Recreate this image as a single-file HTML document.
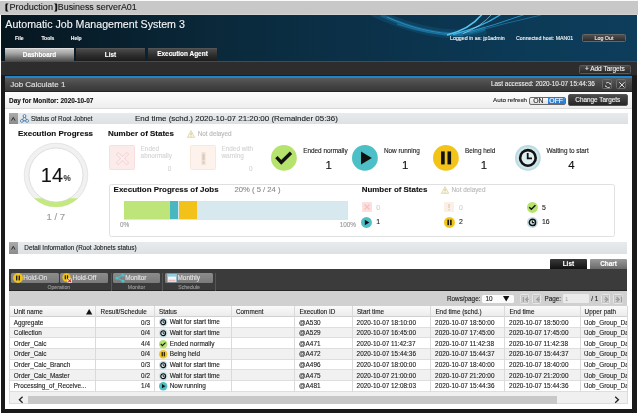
<!DOCTYPE html>
<html><head><meta charset="utf-8">
<style>
*{margin:0;padding:0;box-sizing:border-box}
html,body{width:638px;height:414px;overflow:hidden;background:#fff;font-family:"Liberation Sans",sans-serif;position:relative}
.a{position:absolute;white-space:nowrap;-webkit-text-stroke:0.12px currentColor}
svg{position:absolute;overflow:visible}
</style></head><body><div id="root" style="position:absolute;left:0;top:0;width:638px;height:414px;will-change:transform">

<div class="a" style="left:0px;top:0px;width:638.00px;height:15.00px;background:#c8c8c8;border-top:1px solid #fafafa;border-bottom:1px solid #d2d2d2"></div>
<svg width="60" height="14" style="left:0;top:0"><path d="M8.6 3.4 L6.4 3.4 Q5.4 3.4 5.4 4.6 L5.4 10.2 Q5.4 11.4 6.4 11.4 L8.6 11.4 Q7.2 10.6 7.2 9.2 L7.2 5.6 Q7.2 4.2 8.6 3.4Z" fill="#111"/><path d="M54 3.4 L56.2 3.4 Q57.2 3.4 57.2 4.6 L57.2 10.2 Q57.2 11.4 56.2 11.4 L54 11.4 Q55.4 10.6 55.4 9.2 L55.4 5.6 Q55.4 4.2 54 3.4Z" fill="#111"/></svg>
<div class="a" style="left:9.50px;top:2.16px;font-size:9.1px;line-height:11.375px;color:#1a1a1a">Production</div>
<div class="a" style="left:57.80px;top:2.35px;font-size:8.9px;line-height:11.125px;color:#1a1a1a">Business serverA01</div>
<div class="a" style="left:1px;top:15px;width:636.00px;height:397.50px;background:#1a1a1a"></div>
<div class="a" style="left:1px;top:15px;width:636.00px;height:46.00px;background:linear-gradient(90deg,#06161f 0%,#08202e 18%,#0a293b 35%,#0b2f45 50%,#0b3550 70%,#0c3b58 85%,#0c3d5b 100%);overflow:hidden"><svg width="636" height="46" style="left:0;top:0">
<path d="M372 -3 C400 10 428 18 452 19 C465 19.5 475 18 485 15" stroke="#12506f" stroke-width="9" fill="none" opacity="0.55"/>
<path d="M380 0 C406 12 432 19 456 19 C468 19 476 17 484 14" stroke="#176892" stroke-width="3.5" fill="none" opacity="0.7"/>
<path d="M386 2 C412 14 436 19 460 19" stroke="#2a8cc0" stroke-width="1.2" fill="none" opacity="0.85"/>
<path d="M396 9 C420 17 440 21 462 20.5" stroke="#1b77a8" stroke-width="1.4" fill="none" opacity="0.7"/>
<path d="M446 20 Q470 14 482 -2" stroke="#55c4ee" stroke-width="1.6" fill="none"/>
<path d="M452 19.5 Q482 12 502 -2" stroke="#3cb2e4" stroke-width="1.3" fill="none"/>
<path d="M460 19 Q495 10 525 -1" stroke="#2a98cc" stroke-width="1" fill="none" opacity="0.9"/>
<path d="M468 18 Q505 8 540 0" stroke="#2288bb" stroke-width="0.8" fill="none" opacity="0.8"/>
<path d="M462 18.5 Q480 12 492 -2" stroke="#a8e4fa" stroke-width="0.7" fill="none" opacity="0.9"/>
<path d="M420 -0.5 L545 -0.5" stroke="#2a88b8" stroke-width="1" opacity="0.5"/>
</svg></div>
<div class="a" style="left:5.30px;top:17.86px;font-size:10.64px;line-height:13.3px;color:#f4f4f4">Automatic Job Management System 3</div>
<div class="a" style="left:15.00px;top:35.44px;font-size:5.0px;line-height:6.25px;color:#f0f0f0;font-weight:bold">File</div>
<div class="a" style="left:41.40px;top:35.44px;font-size:5.0px;line-height:6.25px;color:#f0f0f0;font-weight:bold">Tools</div>
<div class="a" style="left:70.80px;top:35.44px;font-size:5.0px;line-height:6.25px;color:#f0f0f0;font-weight:bold">Help</div>
<div class="a" style="left:450.00px;top:35.15px;font-size:5.3px;line-height:6.625px;color:#f4f4f4">Logged in as: jp1admin</div>
<div class="a" style="left:516.00px;top:35.20px;font-size:5.25px;line-height:6.562px;color:#f4f4f4">Connected host: MAN01</div>
<div class="a" style="left:582px;top:34.4px;width:44.00px;height:7.80px;background:linear-gradient(#505050,#2c2c2c);border:0.6px solid #666;border-radius:1.5px"></div>
<div class="a" style="left:554.00px;width:100px;text-align:center;top:35.15px;font-size:5.3px;line-height:6.625px;color:#f0f0f0">Log Out</div>
<div class="a" style="left:5px;top:48px;width:69.00px;height:13.00px;background:linear-gradient(#c6c6c6,#a6a6a6 35%,#6e6e6e 75%,#505050);border-top:1px solid #e0e0e0"></div>
<div class="a" style="left:76px;top:48px;width:69.00px;height:13.00px;background:linear-gradient(#4a4a4a,#2c2c2c 55%,#1c1c1c);border-top:1px solid #555"></div>
<div class="a" style="left:148px;top:48px;width:69.00px;height:13.00px;background:linear-gradient(#4a4a4a,#2c2c2c 55%,#1c1c1c);border-top:1px solid #555"></div>
<div class="a" style="left:-10.50px;width:100px;text-align:center;top:50.50px;font-size:6.38px;line-height:7.975px;color:#fff;font-weight:bold">Dashboard</div>
<div class="a" style="left:60.50px;width:100px;text-align:center;top:50.50px;font-size:6.38px;line-height:7.975px;color:#fff;font-weight:bold">List</div>
<div class="a" style="left:132.50px;width:100px;text-align:center;top:50.43px;font-size:6.45px;line-height:8.062px;color:#fff;font-weight:bold">Execution Agent</div>
<div class="a" style="left:1px;top:61px;width:636.00px;height:15.00px;background:#2d2d2d;border-top:1px solid #4a4a4a;border-bottom:1px solid #1c1c1c"></div>
<div class="a" style="left:578.8px;top:65px;width:52.00px;height:8.90px;background:linear-gradient(#4a4a4a,#2a2a2a);border:0.6px solid #5a5a5a;border-radius:1.5px"></div>
<div class="a" style="left:554.80px;width:100px;text-align:center;top:65.49px;font-size:6.5px;line-height:8.125px;color:#f0f0f0">+ Add Targets</div>
<div class="a" style="left:5px;top:76px;width:627.00px;height:332.50px;background:#fff"></div>
<div class="a" style="left:5px;top:76px;width:627.00px;height:1.60px;background:#1f86cc"></div>
<div class="a" style="left:5px;top:77.6px;width:627.00px;height:14.70px;background:linear-gradient(#5a5a5a,#464646 50%,#383838);border-bottom:1px solid #252525"></div>
<div class="a" style="left:10.20px;top:79.73px;font-size:8.0px;line-height:10.0px;color:#e2e2e2">Job Calculate 1</div>
<div class="a" style="left:491.00px;top:79.98px;font-size:6.4px;line-height:8.0px;color:#ececec">Last accessed: 2020-10-07 15:44:36</div>
<div class="a" style="left:601.8px;top:79.4px;width:10.60px;height:10.00px;background:linear-gradient(#555,#333);border:0.6px solid #6a6a6a;border-radius:1.5px"><svg width="10" height="10" style="left:0;top:0"><path d="M3 3.2 A2.6 2.6 0 0 1 7.3 4.3 M7.2 6.8 A2.6 2.6 0 0 1 2.8 5.8" stroke="#ddd" stroke-width="0.9" fill="none"/><path d="M6.2 3.9 L7.8 4.8 L7.9 2.9Z M3.9 6.2 L2.3 5.3 L2.2 7.1Z" fill="#ddd"/></svg></div>
<div class="a" style="left:615.6px;top:79.4px;width:10.40px;height:10.00px;background:linear-gradient(#555,#333);border:0.6px solid #6a6a6a;border-radius:1.5px"><svg width="10" height="10" style="left:0;top:0"><path d="M2.3 2.3 L7.5 7.5 M7.5 2.3 L2.3 7.5" stroke="#e8e8e8" stroke-width="1"/></svg></div>
<div class="a" style="left:5px;top:92.3px;width:627.00px;height:16.70px;background:linear-gradient(#fdfdfd,#eeeeee);border-bottom:0.8px solid #d8d8d8"></div>
<div class="a" style="left:9.00px;top:97.13px;font-size:6.45px;line-height:8.062px;color:#111;font-weight:bold">Day for Monitor: 2020-10-07</div>
<div class="a" style="left:493.00px;top:95.92px;font-size:6.26px;line-height:7.825px;color:#222">Auto refresh</div>
<div class="a" style="left:529.3px;top:96.9px;width:36.70px;height:8.60px;background:linear-gradient(#fafafa,#dedede);border:0.7px solid #6a6a6a;border-radius:2px;overflow:hidden"><div class="a" style="left:17.3px;top:0;width:20px;height:10px;background:linear-gradient(#3a8ee0,#1a6cc8)"></div></div>
<div class="a" style="left:488.40px;width:100px;text-align:center;top:96.80px;font-size:6.9px;line-height:8.625px;color:#222">ON</div>
<div class="a" style="left:506.20px;width:100px;text-align:center;top:96.80px;font-size:6.9px;line-height:8.625px;color:#fff">OFF</div>
<div class="a" style="left:567.9px;top:94.3px;width:59.90px;height:11.60px;background:linear-gradient(#4a4a4a,#262626);border:0.7px solid #555;border-radius:2px"></div>
<div class="a" style="left:547.80px;width:100px;text-align:center;top:96.08px;font-size:6.4px;line-height:8.0px;color:#f2f2f2">Change Targets</div>
<div class="a" style="left:9px;top:112.8px;width:619.00px;height:11.70px;background:linear-gradient(#e8ebed,#dde1e4)"></div>
<div class="a" style="left:9px;top:112.8px;width:8.60px;height:11.70px;background:linear-gradient(#aaa,#8c8c8c)"></div>
<svg width="8" height="11" style="left:9px;top:113px"><path d="M2.6 7.6 L4.3 4.4 L6 7.6" stroke="#222" stroke-width="0.9" fill="none"/></svg>
<svg width="9" height="9" style="left:20.3px;top:114.3px" viewBox="0 0 9 9"><path d="M4.5 2 L2 6.8 L7 6.8 Z" stroke="#3a72a4" stroke-width="0.9" fill="none"/><circle cx="4.5" cy="2" r="1.4" fill="#fff" stroke="#3a72a4" stroke-width="0.85"/><circle cx="1.9" cy="6.9" r="1.4" fill="#fff" stroke="#3a72a4" stroke-width="0.85"/><circle cx="7.1" cy="6.9" r="1.4" fill="#fff" stroke="#3a72a4" stroke-width="0.85"/></svg>
<div class="a" style="left:31.00px;top:114.87px;font-size:6.41px;line-height:8.012px;color:#222">Status of Root Jobnet</div>
<div class="a" style="left:135.00px;top:113.56px;font-size:7.97px;line-height:9.963px;color:#222">End time (schd.) 2020-10-07 21:20:00 (Remainder 05:36)</div>
<div class="a" style="left:5.50px;width:100px;text-align:center;top:128.83px;font-size:8.0px;line-height:10.0px;color:#111;font-weight:bold">Execution Progress</div>
<svg width="70" height="70" style="left:20.8px;top:140.3px">
<defs><clipPath id="lv"><rect x="0" y="58.2" width="70" height="20"/></clipPath></defs>
<circle cx="35" cy="35" r="29.5" fill="none" stroke="#f1f1f1" stroke-width="5"/>
<circle cx="35" cy="35" r="31.8" fill="none" stroke="#dcdcdc" stroke-width="0.6"/>
<circle cx="35" cy="35" r="29.5" fill="none" stroke="#c3e97f" stroke-width="5" clip-path="url(#lv)"/>
<circle cx="35" cy="35" r="27" fill="none" stroke="#d2d2d2" stroke-width="0.7"/>
</svg>
<div class="a" style="left:40.80px;top:163.17px;font-size:20px;line-height:25.0px;color:#111;-webkit-text-stroke:0.1px #111">14</div>
<div class="a" style="left:63.60px;top:173.83px;font-size:8.2px;line-height:10.25px;color:#444;font-weight:bold">%</div>
<div class="a" style="left:5.80px;width:100px;text-align:center;top:211.27px;font-size:9.5px;line-height:11.875px;color:#9a9a9a">1 / 7</div>
<div class="a" style="left:108.00px;top:128.66px;font-size:7.97px;line-height:9.963px;color:#111;font-weight:bold">Number of States</div>
<svg width="8" height="8" style="left:187px;top:129.5px" viewBox="0 0 10 10"><path d="M5 0.8 L9.6 9.2 L0.4 9.2Z" fill="#faf6e2" stroke="#d2c890" stroke-width="0.8" stroke-linejoin="round"/><path d="M5 3.6 L5 6.6" stroke="#b8ac70" stroke-width="0.9"/><circle cx="5" cy="7.8" r="0.5" fill="#b8ac70"/></svg>
<div class="a" style="left:197.70px;top:129.91px;font-size:6.37px;line-height:7.963px;color:#b8b8b8">Not delayed</div>
<div class="a" style="left:109.3px;top:144.5px;width:25.30px;height:25.10px;background:#fcebeb;border:0.7px solid #f8dede;border-radius:1.5px"><svg width="25" height="25" style="left:0;top:0"><path d="M7 7 L18 18 M18 7 L7 18" stroke="#f5d6d6" stroke-width="3.8"/><path d="M7.6 7.6 L17.4 17.4 M17.4 7.6 L7.6 17.4" stroke="#fcf0f0" stroke-width="1.6"/></svg></div>
<div class="a" style="left:140.60px;top:144.78px;font-size:6.4px;line-height:8.0px;color:#d4d4d4">Ended</div>
<div class="a" style="left:140.60px;top:151.78px;font-size:6.4px;line-height:8.0px;color:#d4d4d4">abnormally</div>
<div class="a" style="left:167.70px;top:164.88px;font-size:6.4px;line-height:8.0px;color:#d4d4d4">0</div>
<div class="a" style="left:190.2px;top:144.5px;width:25.60px;height:25.10px;background:#fdf3ec;border:0.7px solid #f8e8dc;border-radius:1.5px"><svg width="25" height="25" style="left:0;top:0"><rect x="10.5" y="6" width="4" height="13" fill="#efe0d6"/><rect x="11.5" y="8" width="2" height="6" fill="#d8c8bd"/><rect x="11.5" y="15.5" width="2" height="2" fill="#d8c8bd"/></svg></div>
<div class="a" style="left:221.50px;top:144.78px;font-size:6.4px;line-height:8.0px;color:#d4d4d4">Ended with</div>
<div class="a" style="left:221.50px;top:151.78px;font-size:6.4px;line-height:8.0px;color:#d4d4d4">warning</div>
<div class="a" style="left:249.00px;top:164.88px;font-size:6.4px;line-height:8.0px;color:#d4d4d4">0</div>
<svg width="25.8" height="25.8" style="left:271.30px;top:144.70px" viewBox="0 0 25.8 25.8"><circle cx="12.9" cy="12.9" r="12.9" fill="#b6e26e"/><path d="M5.4 12.2 L10.3 17.3 L20 7.8" stroke="#111" stroke-width="3.3" fill="none" stroke-linecap="butt" stroke-linejoin="miter"/></svg>
<svg width="25.8" height="25.8" style="left:352.30px;top:144.70px" viewBox="0 0 25.8 25.8"><circle cx="12.9" cy="12.9" r="12.9" fill="#4dbfc6"/><path d="M9 6.4 L19.8 13 L9 19.6Z" fill="#111"/></svg>
<svg width="25.8" height="25.8" style="left:433.20px;top:144.70px" viewBox="0 0 25.8 25.8"><circle cx="12.9" cy="12.9" r="12.9" fill="#f2c419"/><rect x="8.1" y="6.4" width="3.6" height="13" fill="#111"/><rect x="14.5" y="6.4" width="3.6" height="13" fill="#111"/></svg>
<svg width="25.8" height="25.8" style="left:514.80px;top:144.70px" viewBox="0 0 25.8 25.8"><circle cx="12.9" cy="12.9" r="12.9" fill="#bcdbe3"/><circle cx="12.9" cy="12.9" r="11" fill="#cfe6ec"/><circle cx="12.9" cy="12.9" r="7.8" fill="#ddeef2" stroke="#111" stroke-width="2.6"/><path d="M12.7 8 L12.7 13.4 L17 13.4" stroke="#111" stroke-width="1.8" fill="none"/></svg>
<div class="a" style="left:303.20px;top:146.78px;font-size:6.4px;line-height:8.0px;color:#222">Ended normally</div>
<div class="a" style="left:278.60px;width:100px;text-align:center;top:158.22px;font-size:11.4px;line-height:14.25px;color:#111">1</div>
<div class="a" style="left:383.90px;top:146.78px;font-size:6.4px;line-height:8.0px;color:#222">Now running</div>
<div class="a" style="left:355.20px;width:100px;text-align:center;top:158.22px;font-size:11.4px;line-height:14.25px;color:#111">1</div>
<div class="a" style="left:465.10px;top:146.78px;font-size:6.4px;line-height:8.0px;color:#222">Being held</div>
<div class="a" style="left:434.00px;width:100px;text-align:center;top:158.22px;font-size:11.4px;line-height:14.25px;color:#111">1</div>
<div class="a" style="left:546.40px;top:146.78px;font-size:6.4px;line-height:8.0px;color:#222">Waiting to start</div>
<div class="a" style="left:521.40px;width:100px;text-align:center;top:158.22px;font-size:11.4px;line-height:14.25px;color:#111">4</div>
<div class="a" style="left:108.9px;top:183.5px;width:505.70px;height:53.00px;border:0.8px solid #e0e0e0;border-radius:2.5px"></div>
<div class="a" style="left:113.60px;top:184.99px;font-size:7.94px;line-height:9.925px;color:#111;font-weight:bold">Execution Progress of Jobs</div>
<div class="a" style="left:234.50px;top:184.96px;font-size:7.66px;line-height:9.575px;color:#8a8a8a">20% ( 5 / 24 )</div>
<div class="a" style="left:123.5px;top:200.7px;width:224.00px;height:18.90px;background:#d7e9ef;border:0.7px solid #e3e3e3"></div>
<div class="a" style="left:124px;top:201.2px;width:45.60px;height:17.90px;background:#bde57a"></div>
<div class="a" style="left:169.6px;top:201.2px;width:8.60px;height:17.90px;background:#4ab7c0"></div>
<div class="a" style="left:179px;top:201.2px;width:17.70px;height:17.90px;background:#f2c21a"></div>
<div class="a" style="left:119.90px;top:220.88px;font-size:6.4px;line-height:8.0px;color:#999">0%</div>
<div class="a" style="right:282.00px;top:220.58px;font-size:6.4px;line-height:8.0px;color:#999">100%</div>
<div class="a" style="left:361.70px;top:184.79px;font-size:7.94px;line-height:9.925px;color:#111;font-weight:bold">Number of States</div>
<svg width="8" height="8" style="left:441.2px;top:186px" viewBox="0 0 10 10"><path d="M5 0.8 L9.6 9.2 L0.4 9.2Z" fill="#faf6e2" stroke="#d2c890" stroke-width="0.8" stroke-linejoin="round"/><path d="M5 3.6 L5 6.6" stroke="#b8ac70" stroke-width="0.9"/><circle cx="5" cy="7.8" r="0.5" fill="#b8ac70"/></svg>
<div class="a" style="left:451.50px;top:185.61px;font-size:6.37px;line-height:7.963px;color:#b8b8b8">Not delayed</div>
<div class="a" style="left:361.8px;top:202.2px;width:10px;height:10px;background:#fbe0e0;border-radius:1px"><svg width="10" height="10" style="left:0;top:0"><path d="M2.5 2.5 L7.5 7.5 M7.5 2.5 L2.5 7.5" stroke="#f3c0c0" stroke-width="1.3"/></svg></div>
<div class="a" style="left:376.30px;top:203.70px;font-size:6.9px;line-height:8.625px;color:#d0d0d0">0</div>
<div class="a" style="left:444.2px;top:202.2px;width:10px;height:10px;background:#fcefe6;border-radius:1px"><svg width="10" height="10" style="left:0;top:0"><rect x="4.3" y="2" width="1.4" height="4" fill="#e2cdbd"/><rect x="4.3" y="7" width="1.4" height="1.4" fill="#e2cdbd"/></svg></div>
<div class="a" style="left:459.00px;top:203.70px;font-size:6.9px;line-height:8.625px;color:#d0d0d0">0</div>
<svg width="10.9" height="10.9" style="left:527.25px;top:201.75px" viewBox="0 0 25.8 25.8"><circle cx="12.9" cy="12.9" r="12.9" fill="#b6e26e"/><path d="M5.4 12.2 L10.3 17.3 L20 7.8" stroke="#111" stroke-width="3.3" fill="none" stroke-linecap="butt" stroke-linejoin="miter"/></svg>
<div class="a" style="left:541.90px;top:203.70px;font-size:6.9px;line-height:8.625px;color:#222">5</div>
<svg width="10.9" height="10.9" style="left:361.45px;top:216.65px" viewBox="0 0 25.8 25.8"><circle cx="12.9" cy="12.9" r="12.9" fill="#4dbfc6"/><path d="M9 6.4 L19.8 13 L9 19.6Z" fill="#111"/></svg>
<div class="a" style="left:376.30px;top:218.30px;font-size:6.9px;line-height:8.625px;color:#222">1</div>
<svg width="10.9" height="10.9" style="left:443.75px;top:216.65px" viewBox="0 0 25.8 25.8"><circle cx="12.9" cy="12.9" r="12.9" fill="#f2c419"/><rect x="8.1" y="6.4" width="3.6" height="13" fill="#111"/><rect x="14.5" y="6.4" width="3.6" height="13" fill="#111"/></svg>
<div class="a" style="left:459.00px;top:218.30px;font-size:6.9px;line-height:8.625px;color:#222">2</div>
<svg width="10.9" height="10.9" style="left:527.25px;top:216.55px" viewBox="0 0 25.8 25.8"><circle cx="12.9" cy="12.9" r="12.9" fill="#bcdbe3"/><circle cx="12.9" cy="12.9" r="11" fill="#cfe6ec"/><circle cx="12.9" cy="12.9" r="7.4" fill="#ddeef2" stroke="#111" stroke-width="3.6"/><path d="M12.7 8 L12.7 13.4 L17 13.4" stroke="#111" stroke-width="2.6" fill="none"/></svg>
<div class="a" style="left:541.90px;top:218.30px;font-size:6.9px;line-height:8.625px;color:#222">16</div>
<div class="a" style="left:9.4px;top:242.3px;width:618.10px;height:11.30px;background:linear-gradient(#e8ebed,#dde1e4)"></div>
<div class="a" style="left:9.4px;top:242.3px;width:8.20px;height:11.30px;background:linear-gradient(#aaa,#8c8c8c)"></div>
<svg width="8" height="11" style="left:9.4px;top:242.3px"><path d="M2.6 7.6 L4.3 4.4 L6 7.6" stroke="#222" stroke-width="0.9" fill="none"/></svg>
<div class="a" style="left:24.30px;top:244.10px;font-size:6.38px;line-height:7.975px;color:#222">Detail Information (Root Jobnets status)</div>
<div class="a" style="left:550px;top:258.5px;width:36.80px;height:10.70px;background:linear-gradient(#3a3a3a,#111);border-radius:1px 1px 0 0"></div>
<div class="a" style="left:518.40px;width:100px;text-align:center;top:260.08px;font-size:6.4px;line-height:8.0px;color:#fff;font-weight:bold">List</div>
<div class="a" style="left:589.7px;top:258.5px;width:37.80px;height:10.70px;background:linear-gradient(#9a9a9a,#6a6a6a);border-radius:1px 1px 0 0"></div>
<div class="a" style="left:558.60px;width:100px;text-align:center;top:260.08px;font-size:6.4px;line-height:8.0px;color:#fff;font-weight:bold">Chart</div>
<div class="a" style="left:9.4px;top:269.1px;width:618.10px;height:21.70px;background:#3b3b3b;border-bottom:1px solid #262626"></div>
<div class="a" style="left:11px;top:272.5px;width:47.80px;height:10.10px;background:linear-gradient(#8c8c8c,#7a7a7a);border-radius:1.5px"></div>
<svg width="10" height="10" style="left:13px;top:272.6px" viewBox="0 0 10 10"><circle cx="5" cy="5" r="4.9" fill="#f2c419"/><rect x="3" y="2.6" width="1.4" height="4.8" fill="#222"/><rect x="5.6" y="2.6" width="1.4" height="4.8" fill="#222"/></svg>
<div class="a" style="left:23.30px;top:273.98px;font-size:6.4px;line-height:8.0px;color:#e4e4e4">Hold-On</div>
<div class="a" style="left:60.3px;top:272.5px;width:47.50px;height:10.10px;background:linear-gradient(#8c8c8c,#7a7a7a);border-radius:1.5px"></div>
<svg width="10" height="10" style="left:62px;top:272.6px" viewBox="0 0 10 10"><circle cx="4.5" cy="4.5" r="4.2" fill="#f2c419"/><rect x="2.7" y="2.3" width="1.2" height="4" fill="#222"/><rect x="4.9" y="2.3" width="1.2" height="4" fill="#222"/><rect x="5.6" y="5.6" width="4.2" height="4.2" fill="#fff"/><path d="M6.3 6.3 L9.1 9.1 M9.1 6.3 L6.3 9.1" stroke="#e02020" stroke-width="1.1"/></svg>
<div class="a" style="left:72.60px;top:273.98px;font-size:6.4px;line-height:8.0px;color:#e4e4e4">Hold-Off</div>
<div class="a" style="left:112.9px;top:272.5px;width:47.10px;height:10.10px;background:linear-gradient(#8c8c8c,#7a7a7a);border-radius:1.5px"></div>
<svg width="10" height="10" style="left:114.5px;top:272.8px" viewBox="0 0 10 10"><path d="M2 5 L8 2 M2 5 L8 8" stroke="#48c4d0" stroke-width="1"/><circle cx="2" cy="5" r="1.6" fill="#48c4d0"/><circle cx="8" cy="2" r="1.6" fill="#48c4d0"/><circle cx="8" cy="8" r="1.6" fill="#48c4d0"/></svg>
<div class="a" style="left:125.20px;top:273.98px;font-size:6.4px;line-height:8.0px;color:#e4e4e4">Monitor</div>
<div class="a" style="left:165.2px;top:272.5px;width:47.40px;height:10.10px;background:linear-gradient(#8c8c8c,#7a7a7a);border-radius:1.5px"></div>
<svg width="10" height="10" style="left:166.8px;top:272.8px" viewBox="0 0 10 10"><rect x="0.5" y="1.2" width="9" height="7.8" fill="#f4f4f4" stroke="#7ab8d8" stroke-width="0.6"/><rect x="0.5" y="1.2" width="9" height="2.4" fill="#8ccce8"/><rect x="1.5" y="6.8" width="7" height="0.8" fill="#e89090"/></svg>
<div class="a" style="left:177.50px;top:273.98px;font-size:6.4px;line-height:8.0px;color:#e4e4e4">Monthly</div>
<div class="a" style="left:110.6px;top:272.5px;width:0.80px;height:18.10px;background:#555"></div>
<div class="a" style="left:162.3px;top:272.5px;width:0.80px;height:18.10px;background:#555"></div>
<div class="a" style="left:214.6px;top:272.5px;width:0.80px;height:18.10px;background:#555"></div>
<div class="a" style="left:8.80px;width:100px;text-align:center;top:283.55px;font-size:5.2px;line-height:6.5px;color:#9a9a9a">Operation</div>
<div class="a" style="left:86.50px;width:100px;text-align:center;top:283.55px;font-size:5.2px;line-height:6.5px;color:#9a9a9a">Monitor</div>
<div class="a" style="left:139.00px;width:100px;text-align:center;top:283.55px;font-size:5.2px;line-height:6.5px;color:#9a9a9a">Schedule</div>
<div class="a" style="left:9.4px;top:290.8px;width:618.10px;height:15.20px;background:#d0d0d0"></div>
<div class="a" style="left:447.00px;top:295.05px;font-size:6.33px;line-height:7.912px;color:#222">Rows/page:</div>
<div class="a" style="left:482px;top:295px;width:31.70px;height:8.00px;background:#fbfbfb;border-radius:1.5px"></div>
<div class="a" style="left:485.50px;top:295.08px;font-size:6.4px;line-height:8.0px;color:#222">10</div>
<svg width="7" height="6" style="left:503.2px;top:296px"><path d="M0 0 L6.4 0 L3.2 5.6Z" fill="#111"/></svg>
<div class="a" style="left:520px;top:293.9px;width:9.30px;height:9.80px;background:#d3d3d3;border:0.8px solid #e6e6e6;box-shadow:inset 0 0 0 0.6px #bdbdbd;border-radius:1.5px"><svg width="9.299999999999955" height="9" style="left:0;top:0" viewBox="0 0 10 9"><path d="M2.6 1.8 L2.6 7 M7.6 2 L5 4.4 L7.6 6.8 M4.8 4.4 L8.4 4.4" stroke="#9c9c9c" stroke-width="1.3" fill="none"/></svg></div>
<div class="a" style="left:531.7px;top:293.9px;width:9.30px;height:9.80px;background:#d3d3d3;border:0.8px solid #e6e6e6;box-shadow:inset 0 0 0 0.6px #bdbdbd;border-radius:1.5px"><svg width="9.299999999999955" height="9" style="left:0;top:0" viewBox="0 0 10 9"><path d="M6.6 2 L4 4.4 L6.6 6.8 M3.8 4.4 L7.4 4.4" stroke="#9c9c9c" stroke-width="1.3" fill="none"/></svg></div>
<div class="a" style="left:544.60px;top:295.05px;font-size:6.33px;line-height:7.912px;color:#222">Page:</div>
<div class="a" style="left:562.8px;top:294.3px;width:26.20px;height:8.70px;background:#ebebeb;border-radius:1px"></div>
<div class="a" style="left:565.30px;top:296.35px;font-size:5.2px;line-height:6.5px;color:#aaa">1</div>
<div class="a" style="left:591.30px;top:294.98px;font-size:6.4px;line-height:8.0px;color:#222">/ 1</div>
<div class="a" style="left:600.7px;top:293.9px;width:9.70px;height:9.80px;background:#d3d3d3;border:0.8px solid #e6e6e6;box-shadow:inset 0 0 0 0.6px #bdbdbd;border-radius:1.5px"><svg width="9.699999999999932" height="9" style="left:0;top:0" viewBox="0 0 10 9"><path d="M3.4 2 L6 4.4 L3.4 6.8 M6.2 4.4 L2.6 4.4" stroke="#9c9c9c" stroke-width="1.3" fill="none"/></svg></div>
<div class="a" style="left:613px;top:293.9px;width:10.40px;height:9.80px;background:#d3d3d3;border:0.8px solid #e6e6e6;box-shadow:inset 0 0 0 0.6px #bdbdbd;border-radius:1.5px"><svg width="10.399999999999977" height="9" style="left:0;top:0" viewBox="0 0 10 9"><path d="M7.4 1.8 L7.4 7 M2.4 2 L5 4.4 L2.4 6.8 M5.2 4.4 L1.6 4.4" stroke="#9c9c9c" stroke-width="1.3" fill="none"/></svg></div>
<div class="a" style="left:9.4px;top:306px;width:618.60px;height:11.20px;background:linear-gradient(#fafafa,#ececec);border-bottom:0.7px solid #d0d0d0"></div>
<div class="a" style="left:13.80px;top:307.93px;font-size:6.35px;line-height:7.938px;color:#222">Unit name</div>
<div class="a" style="left:100.60px;top:307.93px;font-size:6.35px;line-height:7.938px;color:#222">Result/Schedule</div>
<div class="a" style="left:159.00px;top:307.93px;font-size:6.35px;line-height:7.938px;color:#222">Status</div>
<div class="a" style="left:236.00px;top:307.93px;font-size:6.35px;line-height:7.938px;color:#222">Comment</div>
<div class="a" style="left:299.40px;top:307.93px;font-size:6.35px;line-height:7.938px;color:#222">Execution ID</div>
<div class="a" style="left:356.90px;top:307.93px;font-size:6.35px;line-height:7.938px;color:#222">Start time</div>
<div class="a" style="left:435.40px;top:307.93px;font-size:6.35px;line-height:7.938px;color:#222">End time (schd.)</div>
<div class="a" style="left:509.40px;top:307.93px;font-size:6.35px;line-height:7.938px;color:#222">End time</div>
<div class="a" style="left:584.60px;top:307.93px;font-size:6.35px;line-height:7.938px;color:#222">Upper path</div>
<svg width="7" height="6" style="left:86.4px;top:309px"><path d="M3.15 0 L6.3 5.4 L0 5.4Z" fill="#111"/></svg>
<div class="a" style="left:9.4px;top:317.2px;width:618.60px;height:10.65px;background:#ffffff;border-bottom:0.7px solid #dedede"></div>
<div class="a" style="left:13.80px;top:318.51px;font-size:6.4px;line-height:8.0px;color:#222">Aggregate</div>
<div class="a" style="right:488.00px;top:318.51px;font-size:6.4px;line-height:8.0px;color:#222">0/3</div>
<svg width="8.4" height="8.4" style="left:159.00px;top:318.32px" viewBox="0 0 25.8 25.8"><circle cx="12.9" cy="12.9" r="12.9" fill="#bcdbe3"/><circle cx="12.9" cy="12.9" r="11" fill="#cfe6ec"/><circle cx="12.9" cy="12.9" r="7.4" fill="#ddeef2" stroke="#111" stroke-width="3.6"/><path d="M12.7 8 L12.7 13.4 L17 13.4" stroke="#111" stroke-width="2.6" fill="none"/></svg>
<div class="a" style="left:169.70px;top:318.47px;font-size:6.44px;line-height:8.05px;color:#222">Wait for start time</div>
<div class="a" style="left:299.10px;top:318.51px;font-size:6.4px;line-height:8.0px;color:#222">@A530</div>
<div class="a" style="left:356.60px;top:318.51px;font-size:6.4px;line-height:8.0px;color:#222">2020-10-07 18:10:00</div>
<div class="a" style="left:435.10px;top:318.51px;font-size:6.4px;line-height:8.0px;color:#222">2020-10-07 18:50:00</div>
<div class="a" style="left:509.10px;top:318.51px;font-size:6.4px;line-height:8.0px;color:#222">2020-10-07 18:50:00</div>
<div class="a" style="left:583.60px;top:318.51px;font-size:6.4px;line-height:8.0px;color:#222;width:44.4px;overflow:hidden">/Job_Group_Da</div>
<div class="a" style="left:9.4px;top:327.84999999999997px;width:618.60px;height:10.65px;background:#f1f1f1;border-bottom:0.7px solid #dedede"></div>
<div class="a" style="left:13.80px;top:329.16px;font-size:6.4px;line-height:8.0px;color:#222">Collection</div>
<div class="a" style="right:488.00px;top:329.16px;font-size:6.4px;line-height:8.0px;color:#222">0/4</div>
<svg width="8.4" height="8.4" style="left:159.00px;top:328.97px" viewBox="0 0 25.8 25.8"><circle cx="12.9" cy="12.9" r="12.9" fill="#bcdbe3"/><circle cx="12.9" cy="12.9" r="11" fill="#cfe6ec"/><circle cx="12.9" cy="12.9" r="7.4" fill="#ddeef2" stroke="#111" stroke-width="3.6"/><path d="M12.7 8 L12.7 13.4 L17 13.4" stroke="#111" stroke-width="2.6" fill="none"/></svg>
<div class="a" style="left:169.70px;top:329.12px;font-size:6.44px;line-height:8.05px;color:#222">Wait for start time</div>
<div class="a" style="left:299.10px;top:329.16px;font-size:6.4px;line-height:8.0px;color:#222">@A529</div>
<div class="a" style="left:356.60px;top:329.16px;font-size:6.4px;line-height:8.0px;color:#222">2020-10-07 16:45:00</div>
<div class="a" style="left:435.10px;top:329.16px;font-size:6.4px;line-height:8.0px;color:#222">2020-10-07 17:45:00</div>
<div class="a" style="left:509.10px;top:329.16px;font-size:6.4px;line-height:8.0px;color:#222">2020-10-07 17:45:00</div>
<div class="a" style="left:583.60px;top:329.16px;font-size:6.4px;line-height:8.0px;color:#222;width:44.4px;overflow:hidden">/Job_Group_Da</div>
<div class="a" style="left:9.4px;top:338.5px;width:618.60px;height:10.65px;background:#ffffff;border-bottom:0.7px solid #dedede"></div>
<div class="a" style="left:13.80px;top:339.81px;font-size:6.4px;line-height:8.0px;color:#222">Order_Calc</div>
<div class="a" style="right:488.00px;top:339.81px;font-size:6.4px;line-height:8.0px;color:#222">4/4</div>
<svg width="8.4" height="8.4" style="left:159.00px;top:339.62px" viewBox="0 0 25.8 25.8"><circle cx="12.9" cy="12.9" r="12.9" fill="#b6e26e"/><path d="M5.4 12.2 L10.3 17.3 L20 7.8" stroke="#111" stroke-width="3.3" fill="none" stroke-linecap="butt" stroke-linejoin="miter"/></svg>
<div class="a" style="left:169.70px;top:339.77px;font-size:6.44px;line-height:8.05px;color:#222">Ended normally</div>
<div class="a" style="left:299.10px;top:339.81px;font-size:6.4px;line-height:8.0px;color:#222">@A471</div>
<div class="a" style="left:356.60px;top:339.81px;font-size:6.4px;line-height:8.0px;color:#222">2020-10-07 11:42:37</div>
<div class="a" style="left:435.10px;top:339.81px;font-size:6.4px;line-height:8.0px;color:#222">2020-10-07 11:42:38</div>
<div class="a" style="left:509.10px;top:339.81px;font-size:6.4px;line-height:8.0px;color:#222">2020-10-07 11:42:38</div>
<div class="a" style="left:583.60px;top:339.81px;font-size:6.4px;line-height:8.0px;color:#222;width:44.4px;overflow:hidden">/Job_Group_Da</div>
<div class="a" style="left:9.4px;top:349.15px;width:618.60px;height:10.65px;background:#f1f1f1;border-bottom:0.7px solid #dedede"></div>
<div class="a" style="left:13.80px;top:350.46px;font-size:6.4px;line-height:8.0px;color:#222">Order_Calc</div>
<div class="a" style="right:488.00px;top:350.46px;font-size:6.4px;line-height:8.0px;color:#222">0/4</div>
<svg width="8.4" height="8.4" style="left:159.00px;top:350.27px" viewBox="0 0 25.8 25.8"><circle cx="12.9" cy="12.9" r="12.9" fill="#f2c419"/><rect x="8.1" y="6.4" width="3.6" height="13" fill="#111"/><rect x="14.5" y="6.4" width="3.6" height="13" fill="#111"/></svg>
<div class="a" style="left:169.70px;top:350.42px;font-size:6.44px;line-height:8.05px;color:#222">Being held</div>
<div class="a" style="left:299.10px;top:350.46px;font-size:6.4px;line-height:8.0px;color:#222">@A472</div>
<div class="a" style="left:356.60px;top:350.46px;font-size:6.4px;line-height:8.0px;color:#222">2020-10-07 15:44:36</div>
<div class="a" style="left:435.10px;top:350.46px;font-size:6.4px;line-height:8.0px;color:#222">2020-10-07 15:44:37</div>
<div class="a" style="left:509.10px;top:350.46px;font-size:6.4px;line-height:8.0px;color:#222">2020-10-07 15:44:37</div>
<div class="a" style="left:583.60px;top:350.46px;font-size:6.4px;line-height:8.0px;color:#222;width:44.4px;overflow:hidden">/Job_Group_Da</div>
<div class="a" style="left:9.4px;top:359.8px;width:618.60px;height:10.65px;background:#ffffff;border-bottom:0.7px solid #dedede"></div>
<div class="a" style="left:13.80px;top:361.11px;font-size:6.4px;line-height:8.0px;color:#222">Order_Calc_Branch</div>
<div class="a" style="right:488.00px;top:361.11px;font-size:6.4px;line-height:8.0px;color:#222">0/3</div>
<svg width="8.4" height="8.4" style="left:159.00px;top:360.93px" viewBox="0 0 25.8 25.8"><circle cx="12.9" cy="12.9" r="12.9" fill="#bcdbe3"/><circle cx="12.9" cy="12.9" r="11" fill="#cfe6ec"/><circle cx="12.9" cy="12.9" r="7.4" fill="#ddeef2" stroke="#111" stroke-width="3.6"/><path d="M12.7 8 L12.7 13.4 L17 13.4" stroke="#111" stroke-width="2.6" fill="none"/></svg>
<div class="a" style="left:169.70px;top:361.07px;font-size:6.44px;line-height:8.05px;color:#222">Wait for start time</div>
<div class="a" style="left:299.10px;top:361.11px;font-size:6.4px;line-height:8.0px;color:#222">@A496</div>
<div class="a" style="left:356.60px;top:361.11px;font-size:6.4px;line-height:8.0px;color:#222">2020-10-07 18:00:00</div>
<div class="a" style="left:435.10px;top:361.11px;font-size:6.4px;line-height:8.0px;color:#222">2020-10-07 18:40:00</div>
<div class="a" style="left:509.10px;top:361.11px;font-size:6.4px;line-height:8.0px;color:#222">2020-10-07 18:40:00</div>
<div class="a" style="left:583.60px;top:361.11px;font-size:6.4px;line-height:8.0px;color:#222;width:44.4px;overflow:hidden">/Job_Group_Da</div>
<div class="a" style="left:9.4px;top:370.45px;width:618.60px;height:10.65px;background:#f1f1f1;border-bottom:0.7px solid #dedede"></div>
<div class="a" style="left:13.80px;top:371.76px;font-size:6.4px;line-height:8.0px;color:#222">Order_Calc_Master</div>
<div class="a" style="right:488.00px;top:371.76px;font-size:6.4px;line-height:8.0px;color:#222">0/2</div>
<svg width="8.4" height="8.4" style="left:159.00px;top:371.57px" viewBox="0 0 25.8 25.8"><circle cx="12.9" cy="12.9" r="12.9" fill="#bcdbe3"/><circle cx="12.9" cy="12.9" r="11" fill="#cfe6ec"/><circle cx="12.9" cy="12.9" r="7.4" fill="#ddeef2" stroke="#111" stroke-width="3.6"/><path d="M12.7 8 L12.7 13.4 L17 13.4" stroke="#111" stroke-width="2.6" fill="none"/></svg>
<div class="a" style="left:169.70px;top:371.72px;font-size:6.44px;line-height:8.05px;color:#222">Wait for start time</div>
<div class="a" style="left:299.10px;top:371.76px;font-size:6.4px;line-height:8.0px;color:#222">@A475</div>
<div class="a" style="left:356.60px;top:371.76px;font-size:6.4px;line-height:8.0px;color:#222">2020-10-07 21:00:00</div>
<div class="a" style="left:435.10px;top:371.76px;font-size:6.4px;line-height:8.0px;color:#222">2020-10-07 21:20:00</div>
<div class="a" style="left:509.10px;top:371.76px;font-size:6.4px;line-height:8.0px;color:#222">2020-10-07 21:20:00</div>
<div class="a" style="left:583.60px;top:371.76px;font-size:6.4px;line-height:8.0px;color:#222;width:44.4px;overflow:hidden">/Job_Group_Da</div>
<div class="a" style="left:9.4px;top:381.1px;width:618.60px;height:10.65px;background:#ffffff;border-bottom:0.7px solid #dedede"></div>
<div class="a" style="left:13.80px;top:382.41px;font-size:6.4px;line-height:8.0px;color:#222">Processing_of_Receive...</div>
<div class="a" style="right:488.00px;top:382.41px;font-size:6.4px;line-height:8.0px;color:#222">1/4</div>
<svg width="8.4" height="8.4" style="left:159.00px;top:382.23px" viewBox="0 0 25.8 25.8"><circle cx="12.9" cy="12.9" r="12.9" fill="#4dbfc6"/><path d="M9 6.4 L19.8 13 L9 19.6Z" fill="#111"/></svg>
<div class="a" style="left:169.70px;top:382.37px;font-size:6.44px;line-height:8.05px;color:#222">Now running</div>
<div class="a" style="left:299.10px;top:382.41px;font-size:6.4px;line-height:8.0px;color:#222">@A481</div>
<div class="a" style="left:356.60px;top:382.41px;font-size:6.4px;line-height:8.0px;color:#222">2020-10-07 12:08:03</div>
<div class="a" style="left:435.10px;top:382.41px;font-size:6.4px;line-height:8.0px;color:#222">2020-10-07 15:44:36</div>
<div class="a" style="left:509.10px;top:382.41px;font-size:6.4px;line-height:8.0px;color:#222">2020-10-07 15:44:36</div>
<div class="a" style="left:583.60px;top:382.41px;font-size:6.4px;line-height:8.0px;color:#222;width:44.4px;overflow:hidden">/Job_Group_Da</div>
<div class="a" style="left:95.2px;top:306px;width:0.70px;height:85.75px;background:#dadada"></div>
<div class="a" style="left:153.6px;top:306px;width:0.70px;height:85.75px;background:#dadada"></div>
<div class="a" style="left:230.6px;top:306px;width:0.70px;height:85.75px;background:#dadada"></div>
<div class="a" style="left:294px;top:306px;width:0.70px;height:85.75px;background:#dadada"></div>
<div class="a" style="left:351.5px;top:306px;width:0.70px;height:85.75px;background:#dadada"></div>
<div class="a" style="left:430px;top:306px;width:0.70px;height:85.75px;background:#dadada"></div>
<div class="a" style="left:504px;top:306px;width:0.70px;height:85.75px;background:#dadada"></div>
<div class="a" style="left:580.2px;top:306px;width:0.70px;height:85.75px;background:#dadada"></div>
<div class="a" style="left:9.4px;top:306px;width:0.50px;height:85.75px;background:#dadada"></div>
<div class="a" style="left:627.4px;top:306px;width:0.60px;height:85.75px;background:#dadada"></div>
<div class="a" style="left:9.4px;top:392.4px;width:618.60px;height:12.00px;background:#f0f0f0;border:0.6px solid #dcdcdc;border-top:none"></div>
<div class="a" style="left:27.8px;top:395.9px;width:528.90px;height:8.20px;background:#c8c8c8"></div>
<svg width="6" height="8" style="left:17.9px;top:396.3px"><path d="M4.6 0.8 L1.4 3.8 L4.6 6.8" stroke="#222" stroke-width="1.3" fill="none"/></svg>
<svg width="6" height="8" style="left:614.1px;top:396.3px"><path d="M1.2 0.8 L4.4 3.8 L1.2 6.8" stroke="#222" stroke-width="1.3" fill="none"/></svg>
</div></body></html>
